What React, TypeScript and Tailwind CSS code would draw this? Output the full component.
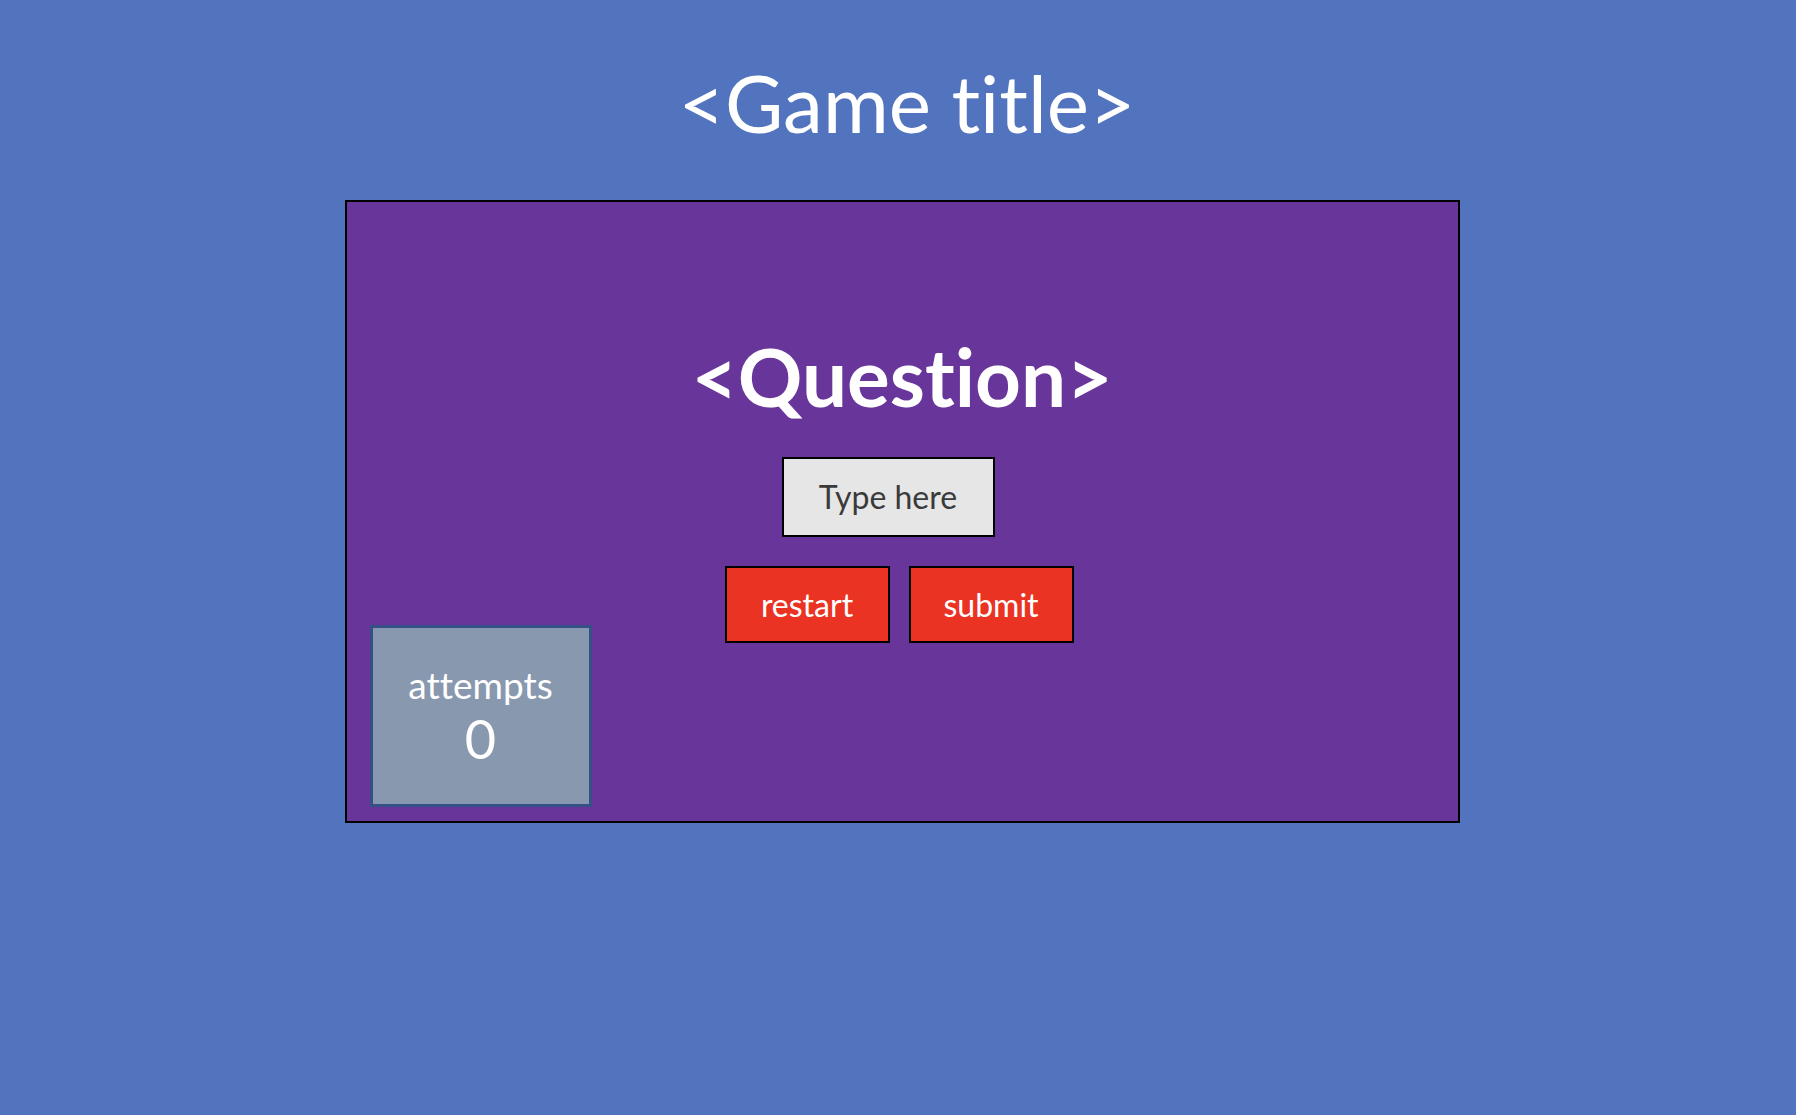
const App = () => {
  return (
    <div className="min-h-[1115px] w-full bg-[#5273be] font-['Lato','Open_Sans',sans-serif] text-white [font-variant-ligatures:none]">
      <div className="flex flex-col items-center">
        <h1 className="mt-[54px] ml-[18px] text-[80px] leading-[96px] font-normal">&lt;Game title&gt;</h1>

        <div className="mt-[50px] ml-[8px] flex h-[623px] w-[1115px] flex-col items-center border-2 border-black bg-[#68359a]">
          <h2 className="mt-[126px] text-[80px] leading-[96px] font-bold">&lt;Question&gt;</h2>

          <div className="mt-[33px] mr-[28px] flex h-[80px] w-[213px] items-center justify-center border-2 border-black bg-[#e6e6e6] text-[32px] text-[#3a3a3a]">
            Type here
          </div>

          <div className="mt-[29px] mr-[6px] flex gap-[19px]">
            <button className="flex h-[77px] w-[165px] items-center justify-center border-2 border-black bg-[#ea3323] text-[32px] text-white">
              restart
            </button>
            <button className="flex h-[77px] w-[165px] items-center justify-center border-2 border-black bg-[#ea3323] text-[32px] text-white">
              submit
            </button>
          </div>

          <div className="-mt-[18px] ml-[23px] flex h-[182px] w-[222px] flex-col items-center justify-center self-start border-[3px] border-[#345087] bg-[#8898af]">
            <span className="text-[37px] leading-[46px]">attempts</span>
            <span className="text-[54px] leading-[62px]">0</span>
          </div>
        </div>
      </div>
    </div>
  );
};

export default App;
